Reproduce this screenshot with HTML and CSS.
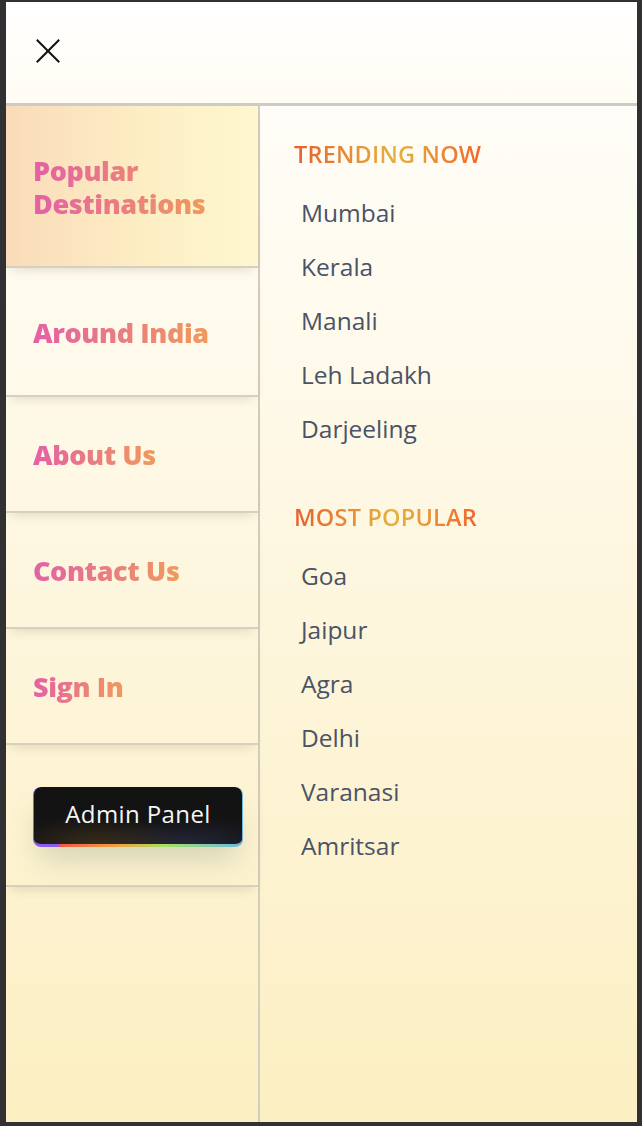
FILE: index.html
```html
<!DOCTYPE html>
<html lang="en">
<head>
<meta charset="utf-8">
<title>Menu</title>
<link rel="stylesheet" href="styles.css">
</head>
<body>
<div class="frame">
  <header class="header">
    <button class="close" aria-label="Close">
      <svg width="24" height="24" viewBox="0 0 24 24"><path d="M1.5 1.5 L22.5 22.5 M22.5 1.5 L1.5 22.5" stroke="#111" stroke-width="2" fill="none" stroke-linecap="square"/></svg>
    </button>
  </header>
  <div class="body">
    <nav class="side">
      <a class="side-item active"><span class="grad">Popular<br>Destinations</span></a>
      <a class="side-item second"><span class="grad">Around India</span></a>
      <a class="side-item"><span class="grad">About Us</span></a>
      <a class="side-item"><span class="grad">Contact Us</span></a>
      <a class="side-item"><span class="grad">Sign In</span></a>
      <div class="side-item admin">
        <button class="admin-btn">Admin Panel</button>
      </div>
    </nav>
    <section class="lists">
      <h3 class="heading">TRENDING NOW</h3>
      <ul class="places">
        <li>Mumbai</li>
        <li>Kerala</li>
        <li>Manali</li>
        <li>Leh Ladakh</li>
        <li>Darjeeling</li>
      </ul>
      <h3 class="heading second-heading">MOST POPULAR</h3>
      <ul class="places">
        <li>Goa</li>
        <li>Jaipur</li>
        <li>Agra</li>
        <li>Delhi</li>
        <li>Varanasi</li>
        <li>Amritsar</li>
      </ul>
    </section>
  </div>
</div>
</body>
</html>
```
FILE: styles.css
```css
* { box-sizing: border-box; }
html, body { margin: 0; padding: 0; }
body {
  background: #313133;
  font-family: "Open Sans", "Noto Sans", sans-serif;
}
.frame {
  margin: 2px 5px 0 6px;
  height: 1120px;
  display: flex;
  flex-direction: column;
  overflow: hidden;
}
.header {
  height: 104px;
  flex: none;
  background: linear-gradient(#ffffff, #fffcf4);
  border-bottom: 3px solid #cecbc5;
  display: flex;
  align-items: flex-start;
  padding: 37px 0 0 30px;
}
.close {
  border: 0;
  background: none;
  padding: 0;
  width: 24px;
  height: 24px;
  display: block;
}
.close svg { display: block; }
.body {
  flex: 1;
  display: flex;
  background: linear-gradient(#fffdf8, #fcefc2);
}
.side {
  width: 254px;
  flex: none;
  border-right: 2px solid #d3cdbb;
  display: flex;
  flex-direction: column;
}
.side-item {
  display: block;
  height: 116px;
  display: flex;
  align-items: center;
  padding-left: 27px;
  border-bottom: 2px solid #d6d0bf;
  box-shadow: 0 7px 10px -5px rgba(90, 70, 20, 0.16);
  position: relative;
  font-weight: 800;
  font-size: 27px;
  line-height: 33px;
  letter-spacing: -0.4px;
}
.side-item.active {
  height: 162px;
  background: linear-gradient(90deg, #fadbb9, #fdeec4 55%, #fef7cf);
  padding-top: 2px;
}
.side-item.second {
  height: 129px;
  padding-top: 2px;
}
.grad {
  background: linear-gradient(90deg, #e460a7, #ef9a5b);
  -webkit-background-clip: text;
  background-clip: text;
  color: transparent;
}
.side-item.admin {
  height: 142px;
  align-items: flex-start;
  padding-top: 42px;
}
.admin-btn {
  width: 210px;
  height: 60px;
  border-radius: 8px;
  color: #f5f5f5;
  font-family: inherit;
  font-weight: 500;
  font-size: 24px;
  letter-spacing: 0.4px;
  padding: 0 0 4px 0;
  background:
    radial-gradient(ellipse 60% 70% at 30% 100%, rgba(120, 90, 40, 0.35), transparent 70%),
    radial-gradient(ellipse 60% 70% at 75% 100%, rgba(60, 70, 120, 0.35), transparent 70%),
    linear-gradient(#121212, #141414) padding-box,
    linear-gradient(90deg, #8a5cf0 0%, #8a5cf0 12%, #ef5a4a 13%, #f0a040 40%, #a8e060 62%, #6bb8e0 100%) border-box;
  border: 3px solid transparent;
  border-top-width: 0;
  border-left-width: 1px;
  border-right-width: 1px;
  box-shadow: 0 18px 26px -6px rgba(200, 210, 150, 0.45), 0 18px 30px -10px rgba(180, 160, 200, 0.35);
}
.lists {
  flex: 1;
  padding: 34px 0 0 34px;
}
.heading {
  margin: 0;
  font-size: 23.5px;
  line-height: 28px;
  font-weight: 600;
  letter-spacing: 0.2px;
  display: inline-block;
  background: linear-gradient(90deg, #e95f2c 0%, #e4b23e 55%, #f1652b 100%);
  -webkit-background-clip: text;
  background-clip: text;
  color: transparent;
}
.second-heading { margin-top: 47px; }
.places {
  list-style: none;
  margin: 18px 0 0 0;
  padding: 0 0 0 7px;
}
.places li {
  font-size: 24.5px;
  line-height: 54px;
  height: 54px;
  color: #4a5366;
}
```
